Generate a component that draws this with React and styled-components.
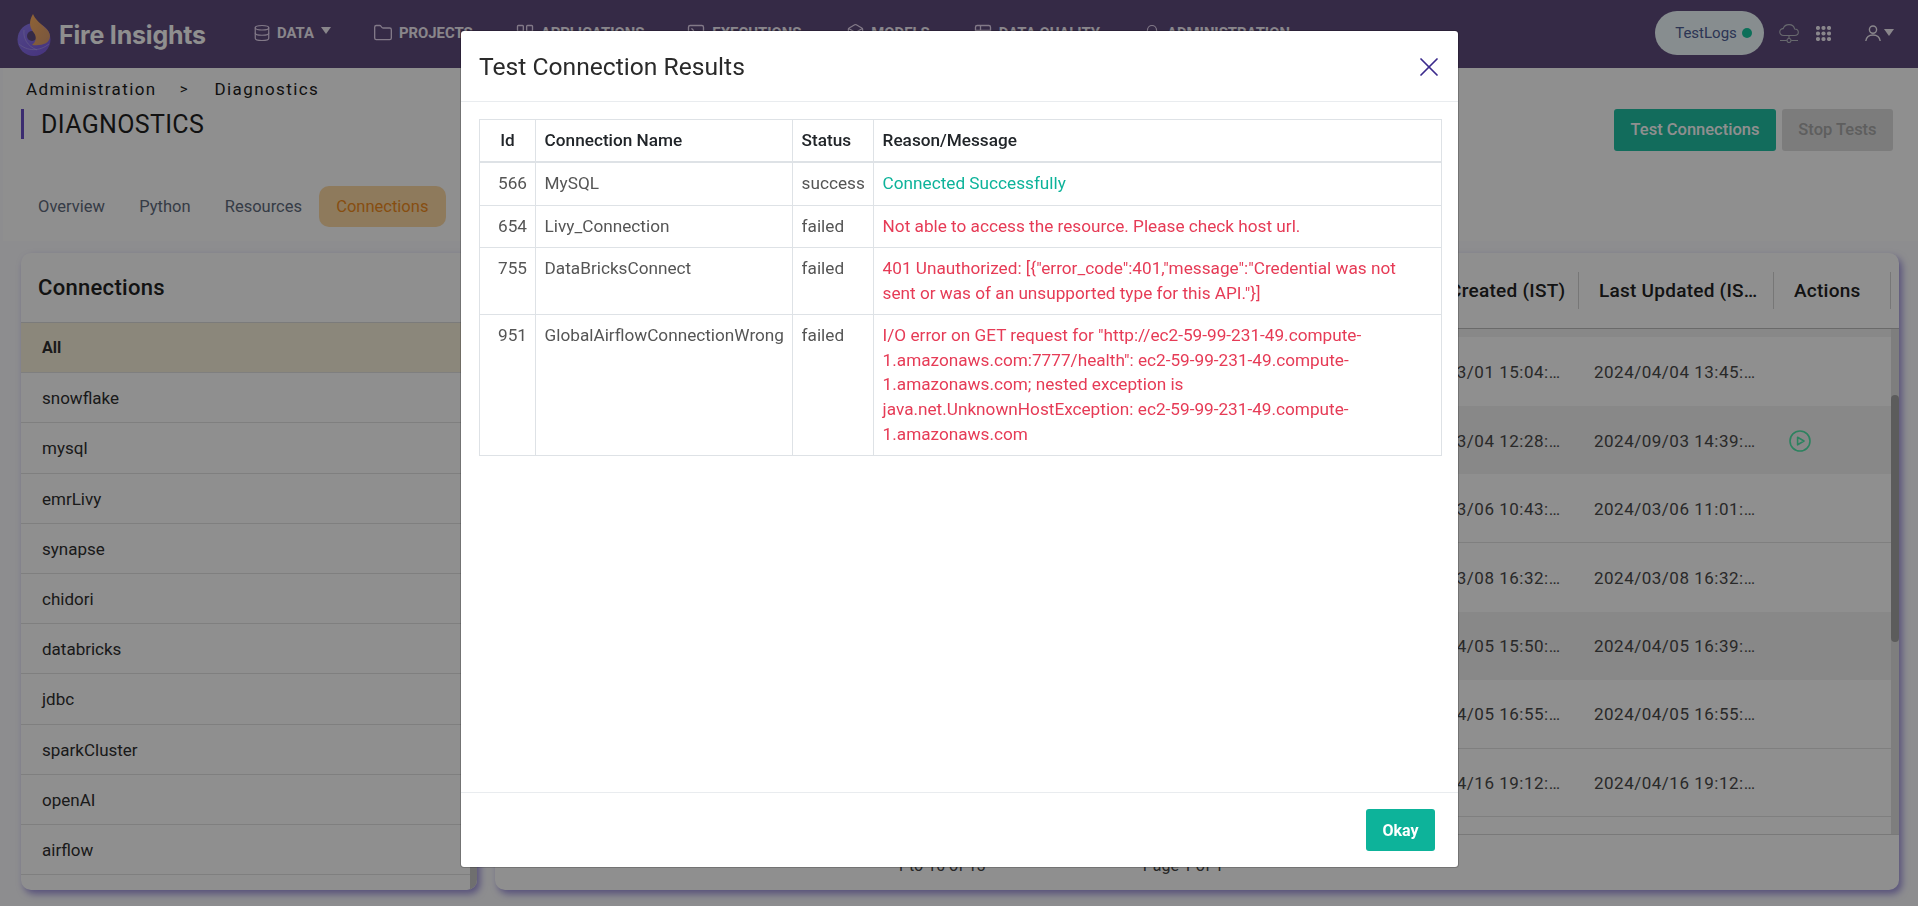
import React, { useLayoutEffect, useRef } from 'react';
import styled, { createGlobalStyle } from 'styled-components';
import { Database, Folder, LayoutGrid, SquareTerminal, Box, Table2, Bell, X } from 'lucide-react';

const Global = createGlobalStyle`
  html, body { margin: 0; padding: 0; height: 100%; overflow: hidden; }
  body { font-family: Roboto, "Liberation Sans", sans-serif; background: #fbfbff; color: #212529; }
  * { box-sizing: border-box; }
`;

const Page = styled.div`
  width: 1918px; height: 906px; display: flex; flex-direction: column; overflow: hidden;
`;

const Nav = styled.header`
  height: 68px; flex: none; background: #5f4b7d; display: flex; align-items: center; padding: 0 24px 0 17px;
`;
const Brand = styled.div`
  display: flex; align-items: center; gap: 8px; width: 236px; padding-top: 1px;
`;
const BrandName = styled.span`
  font-family: Inter, "Open Sans", sans-serif; font-weight: 700; font-size: 25px; letter-spacing: -0.2px; color: #fff; white-space: nowrap;
`;
const Menu = styled.nav`
  display: flex; gap: 42px; align-items: center; padding-bottom: 3px;
`;
const MenuItem = styled.a`
  display: flex; align-items: center; gap: 6px; font-size: 14.85px; font-weight: 700; color: #f4eff8; white-space: nowrap;
  margin-left: ${p => p.$ml || 0}px;
  svg { color: #e8d8f2; }
`;
const Caret = styled.i`
  display: inline-block; width: 0; height: 0; margin-left: ${p => p.$ml || 0}px; margin-bottom: 4px;
  border-left: 5px solid transparent; border-right: 5px solid transparent; border-top: 7px solid #f4eff8;
`;
const NavRight = styled.div`
  margin-left: auto; display: flex; align-items: center;
`;
const EnvPill = styled.div`
  width: 109px; height: 44px; border-radius: 22px; background: #f0fbff; display: flex; align-items: center; gap: 5px;
  justify-content: center; padding-left: 8px; font-size: 15px; color: #4f5f96; margin-bottom: 2px;
`;
const Dot = styled.i`
  width: 10px; height: 10px; border-radius: 50%; background: #16c79f;
`;
const IconSlot = styled.span`
  display: flex; align-items: center; margin-left: ${p => p.$ml}px; color: ${p => p.$c || '#f4eff8'}; margin-bottom: 2px;
`;

const PageHead = styled.section`
  height: 173px; flex: none; margin-left: 3px; background: #fff; display: flex; justify-content: space-between; padding: 9px 25px 0 18px;
`;
const HeadLeft = styled.div`display: flex; flex-direction: column;`;
const Crumbs = styled.div`
  height: 24px; margin-left: 5px; display: flex; align-items: center; font-size: 17px; letter-spacing: 1.4px; color: #1c1c1c;
`;
const CrumbSep = styled.span`
  margin: 0 27px 0 23px; font-size: 15px; letter-spacing: 0;
`;
const Title = styled.h1`
  margin: 8px 0 0; height: 30px; border-left: 3px solid #6a4fc8; padding-left: 17px; font-size: 25px; letter-spacing: .35px; line-height: 32px; font-weight: 400; color: #1f1f1f;
`;
const Tabs = styled.div`
  display: flex; margin-top: 47px;
`;
const Tab = styled.button`
  height: 41px; border: 0; padding: 0 17.1px 1px; border-radius: 10px; font: 400 16.5px Roboto, sans-serif;
  background: ${p => (p.$active ? '#fdd9a5' : 'transparent')}; color: ${p => (p.$active ? '#f08c1e' : '#5f6b7d')};
`;
const HeadActions = styled.div`
  display: flex; gap: 6px; padding-top: 32px;
`;
const ActionBtn = styled.button`
  height: 42px; border: 0; border-radius: 3px; font: 500 16.5px Roboto, sans-serif; padding: 0 0 2px; width: ${p => p.$w}px;
  background: ${p => (p.$muted ? '#dedede' : '#20c0a4')}; color: ${p => (p.$muted ? '#a8a8a8' : '#fff')};
`;

const Main = styled.main`
  flex: 1; min-height: 0; display: flex; gap: 18px; padding: 12px 19px 16px 21px;
`;
const Card = styled.div`
  background: #fff; border-radius: 10px; overflow: hidden; display: flex; flex-direction: column;
  box-shadow: 3px 4px 7px rgba(80, 60, 190, 0.55);
`;
const SideCard = styled(Card)`width: 456px; flex: none;`;
const TableCard = styled(Card)`flex: 1; min-width: 0;`;
const SideTitle = styled.h2`
  margin: 0; height: 70px; flex: none; display: flex; align-items: center; padding-left: 17px; font-size: 22px; font-weight: 500; letter-spacing: .3px;
  border-bottom: 1px solid #dcdcdc; color: #222;
`;
const Scroller = styled.div`
  flex: 1; min-width: 0; min-height: 0; overflow-y: scroll; scrollbar-width: none;
`;
const Track = styled.div`
  flex: none; width: ${p => p.$w}px; background: ${p => p.$bg};
`;
const Thumb = styled.div`
  height: 247px; margin-top: 66px; border-radius: 4px; background: #a5a5a5;
`;
const SideBody = styled.div`
  flex: 1; min-height: 0; display: flex;
`;
const SideItem = styled.div`
  height: 50.2px; display: flex; align-items: center; padding: ${p => (p.$active ? 0 : 1)}px 0 0 21px; font-size: ${p => (p.$active ? 16 : 17)}px; border-bottom: 1px solid #e2e2e2;
  font-weight: ${p => (p.$active ? 700 : 400)}; background: ${p => (p.$active ? '#f8f0dc' : 'transparent')}; color: #2f2f2f;
`;

const GridHead = styled.div`
  height: 76px; flex: none; display: grid; grid-template-columns: 1fr 195px 195px 117px; align-items: center; padding-right: 8px;
  border-bottom: 1px solid #bdbdbd;
`;
const HeadCell = styled.div`
  height: 37px; display: flex; align-items: center; padding: 0 ${p => p.$pr ?? 15}px 0 20px; font-size: 19px; font-weight: 500; letter-spacing: .25px; color: #222;
  border-right: 1px solid #d4d4d4; white-space: nowrap; overflow: hidden; min-width: 0;
  span { overflow: hidden; text-overflow: ellipsis; }
`;
const GridBody = styled.div`
  flex: none; height: 505px; display: flex;
`;
const GridRows = styled.div`padding-top: 5px;`;
const GridRow = styled.div`
  height: 68.6px; display: grid; grid-template-columns: 1fr 195px 195px 117px; align-items: center;
  background: ${p => (p.$shade ? '#f2f2f2' : '#fff')}; ${p => (p.$line ? 'border-bottom: 1px solid #e2e2e2;' : '')}
`;
const Cell = styled.div`
  padding: 1px 15px 0; font-size: 17px; letter-spacing: .5px; color: #4a4a4a; white-space: nowrap; overflow: hidden; text-overflow: ellipsis;
`;
const ActionCell = styled.div`
  padding: 2px 0 0 15px; display: flex; color: #50e8aa;
`;
const GridFoot = styled.div`
  flex: 1; border-top: 1px solid #d8d8d8; display: flex; align-items: center; gap: 157px; font-size: 16px; color: #444; padding: 6px 0 0 401px;
`;

const Backdrop = styled.div`
  position: fixed; inset: 0; background: rgba(0, 0, 0, 0.44); display: flex; justify-content: center; padding: 30px 0 0 1px;
`;
const Modal = styled.div`
  width: 999px; height: 838px; background: #fff; border-radius: 4px; display: flex; flex-direction: column; border: 1px solid rgba(0,0,0,.2); background-clip: padding-box;
`;
const ModalHead = styled.div`
  height: 71px; flex: none; display: flex; align-items: center; justify-content: space-between; padding: 0 13px 0 18px; border-bottom: 1px solid #e9ecef;
`;
const ModalTitle = styled.h3`
  margin: 0; font-size: 24.65px; font-weight: 400; color: #2a2a2a;
`;
const CloseBtn = styled.button`
  border: 0; background: none; padding: 0; margin-top: 2px; display: flex; color: #3b2a8c;
`;
const ModalBody = styled.div`
  flex: 1; padding: 17px 16px 0 18px;
`;
const Results = styled.table`
  width: 963px; border-collapse: collapse; table-layout: fixed; font-size: 17.2px; line-height: 24.7px;
  th, td { border: 1px solid #dee2e6; padding: 8.1px 8.6px 8.5px; vertical-align: top; text-align: left; }
  th { font-weight: 500; color: #212529; border-bottom-width: 2px; }
  td { color: #555; }
`;
const IdHead = styled.th`&& { text-align: center; }`;
const IdCell = styled.td`&& { text-align: right; padding-right: 8px; }`;
const Msg = styled.td`&& { color: ${p => (p.$ok ? '#0db39a' : '#e63b56')}; }`;
const ModalFoot = styled.div`
  height: 75px; flex: none; border-top: 1px solid #e9ecef; display: flex; justify-content: flex-end; align-items: flex-start; padding: 16px 23px 0 0;
`;
const OkBtn = styled.button`
  width: 69px; height: 42px; border: 0; border-radius: 3px; background: #0db39a; color: #fff; font: 700 16px Roboto, sans-serif;
`;

const Flame = () => (
  <svg width="34" height="42" viewBox="0 0 34 42">
    <defs>
      <linearGradient id="bowl" x1="0" y1="0" x2="1" y2="1">
        <stop offset="0" stopColor="#8f7cf0" /><stop offset="1" stopColor="#7d5ae0" />
      </linearGradient>
      <linearGradient id="gold" x1="0" y1="0" x2="1" y2="1">
        <stop offset="0" stopColor="#ffb060" /><stop offset="1" stopColor="#d79a70" />
      </linearGradient>
    </defs>
    <circle cx="17" cy="25.5" r="16.5" fill="url(#bowl)" />
    <path d="M2 30 C10 37 22 38 32 30" stroke="#b8a8f0" strokeWidth="1" fill="none" opacity=".6" />
    <path d="M7 16 C6 24 10 32 20 36" stroke="#b8a8f0" strokeWidth="1" fill="none" opacity=".6" />
    <circle cx="15" cy="22" r="5" fill="#5f4b7d" />
    <path d="M16 0 C11 8 13 14 17 19 C20 23 19 28 15 31 C24 32 33 30 33 22 C33 14 20 10 16 0 Z" fill="url(#gold)" />
  </svg>
);

const CloudNet = () => (
  <svg width="20" height="19" viewBox="0 0 20 19" fill="none" stroke="currentColor" strokeWidth="1.1">
    <path d="M5 11.5 C1.5 11.5 .6 9 .8 7.5 C1 5.5 3 4.5 4.2 4.7 C5 2 7.5 .6 10 .6 C13 .6 15.2 2.6 15.6 5 C17.8 5 19.3 6.5 19.3 8.3 C19.3 10.3 17.6 11.5 15.5 11.5 Z" />
    <path d="M10 11.5 V14.5 M1 16.5 H7.8 M12.2 16.5 H19" />
    <circle cx="10" cy="16.5" r="2" />
  </svg>
);
const Apps = () => (
  <svg width="15" height="15" viewBox="0 0 15 15" fill="currentColor">
    {[2, 7.5, 13].flatMap(x => [2, 7.5, 13].map(y => <circle key={`${x}-${y}`} cx={x} cy={y} r="2.1" />))}
  </svg>
);
const Person = () => (
  <svg width="16" height="17" viewBox="0 0 16 17" fill="none" stroke="currentColor" strokeWidth="1.4">
    <circle cx="8" cy="4.6" r="3.6" />
    <path d="M.8 16 C1.5 11.5 4.5 10 8 10 C11.5 10 14.5 11.5 15.2 16" />
  </svg>
);
const PlayRing = () => (
  <svg width="22" height="22" viewBox="0 0 22 22" fill="none" stroke="currentColor" strokeWidth="1.6">
    <circle cx="11" cy="11" r="10" />
    <path d="M8.6 7.2 L15 11 L8.6 14.8 Z" strokeLinejoin="round" />
  </svg>
);

const sources = ['All', 'snowflake', 'mysql', 'emrLivy', 'synapse', 'chidori', 'databricks', 'jdbc', 'sparkCluster', 'openAI', 'airflow', ''];

const rows = [
  { c: '2024/02/20 11:20:41', u: '2024/02/20 11:20:41' },
  { c: '2024/02/27 17:02:13', u: '2024/02/27 17:02:13', shade: true },
  { c: '2024/03/01 15:04:52', u: '2024/04/04 13:45:10' },
  { c: '2024/03/04 12:28:33', u: '2024/09/03 14:39:27', shade: true, play: true },
  { c: '2024/03/06 10:43:19', u: '2024/03/06 11:01:08', line: true },
  { c: '2024/03/08 16:32:44', u: '2024/03/08 16:32:44' },
  { c: '2024/04/05 15:50:06', u: '2024/04/05 16:39:21', shade: true },
  { c: '2024/04/05 16:55:37', u: '2024/04/05 16:55:37', line: true },
  { c: '2024/04/16 19:12:02', u: '2024/04/16 19:12:02', line: true },
  { c: '2024/04/18 10:10:15', u: '2024/04/18 10:10:15' },
  { c: '2024/04/19 12:31:48', u: '2024/04/19 12:31:48' },
  { c: '2024/04/22 09:47:30', u: '2024/04/22 09:47:30' },
  { c: '2024/04/23 14:05:59', u: '2024/04/23 14:05:59' },
  { c: '2024/04/24 16:21:12', u: '2024/04/24 16:21:12' },
  { c: '2024/04/25 18:44:26', u: '2024/04/25 18:44:26' },
];

const results = [
  { id: 566, name: 'MySQL', status: 'success', msg: 'Connected Successfully', ok: true },
  { id: 654, name: 'Livy_Connection', status: 'failed', msg: 'Not able to access the resource. Please check host url.' },
  { id: 755, name: 'DataBricksConnect', status: 'failed', msg: '401 Unauthorized: [{"error_code":401,"message":"Credential was not sent or was of an unsupported type for this API."}]' },
  { id: 951, name: 'GlobalAirflowConnectionWrong', status: 'failed', msg: 'I/O error on GET request for "http://ec2-59-99-231-49.compute-1.amazonaws.com:7777/health": ec2-59-99-231-49.compute-1.amazonaws.com; nested exception is java.net.UnknownHostException: ec2-59-99-231-49.compute-1.amazonaws.com' },
];

export default function App() {
  const body = useRef(null);
  useLayoutEffect(() => { if (body.current) body.current.scrollTop = 133.5; }, []);
  return (
    <>
      <Global />
      <Page>
        <Nav>
          <Brand><Flame /><BrandName>Fire Insights</BrandName></Brand>
          <Menu>
            <MenuItem><Database size={18} strokeWidth={1.6} />DATA<Caret $ml={1} /></MenuItem>
            <MenuItem><Folder size={20} strokeWidth={1.6} />PROJECTS</MenuItem>
            <MenuItem><LayoutGrid size={20} strokeWidth={1.6} />APPLICATIONS</MenuItem>
            <MenuItem><SquareTerminal size={20} strokeWidth={1.6} />EXECUTIONS</MenuItem>
            <MenuItem $ml={3}><Box size={19} strokeWidth={1.6} />MODELS</MenuItem>
            <MenuItem $ml={1}><Table2 size={20} strokeWidth={1.6} />DATA QUALITY</MenuItem>
            <MenuItem $ml={1}><Bell size={18} strokeWidth={1.6} />ADMINISTRATION</MenuItem>
          </Menu>
          <NavRight>
            <EnvPill>TestLogs<Dot /></EnvPill>
            <IconSlot $ml={15} $c="#b9bcc4"><CloudNet /></IconSlot>
            <IconSlot $ml={17}><Apps /></IconSlot>
            <IconSlot $ml={34}><Person /></IconSlot>
            <Caret $ml={3} />
          </NavRight>
        </Nav>
        <PageHead>
          <HeadLeft>
            <Crumbs>Administration<CrumbSep>&gt;</CrumbSep>Diagnostics</Crumbs>
            <Title>DIAGNOSTICS</Title>
            <Tabs>
              <Tab>Overview</Tab><Tab>Python</Tab><Tab>Resources</Tab><Tab $active>Connections</Tab>
            </Tabs>
          </HeadLeft>
          <HeadActions>
            <ActionBtn $w={162}>Test Connections</ActionBtn>
            <ActionBtn $w={111} $muted>Stop Tests</ActionBtn>
          </HeadActions>
        </PageHead>
        <Main>
          <SideCard>
            <SideTitle>Connections</SideTitle>
            <SideBody>
              <Scroller>
                {sources.map((s, i) => <SideItem key={i} $active={i === 0}>{s}</SideItem>)}
              </Scroller>
              <Track $w={7} $bg="#c6c6c6" />
            </SideBody>
          </SideCard>
          <TableCard>
            <GridHead>
              <div />
              <HeadCell $pr={0}><span>Date Created (IST)</span></HeadCell>
              <HeadCell $pr={12}><span>Last Updated (IST)</span></HeadCell>
              <HeadCell><span>Actions</span></HeadCell>
            </GridHead>
            <GridBody>
              <Scroller ref={body}>
                <GridRows>
                  {rows.map((r, i) => (
                    <GridRow key={i} $shade={r.shade} $line={r.line}>
                      <div />
                      <Cell>{r.c}</Cell>
                      <Cell>{r.u}</Cell>
                      <ActionCell>{r.play && <PlayRing />}</ActionCell>
                    </GridRow>
                  ))}
                </GridRows>
              </Scroller>
              <Track $w={8} $bg="#e1e1e1"><Thumb /></Track>
            </GridBody>
            <GridFoot><span>1 to 10 of 13</span><span>Page 1 of 1</span></GridFoot>
          </TableCard>
        </Main>
      </Page>
      <Backdrop>
        <Modal>
          <ModalHead>
            <ModalTitle>Test Connection Results</ModalTitle>
            <CloseBtn aria-label="Close"><X size={32} strokeWidth={1.3} /></CloseBtn>
          </ModalHead>
          <ModalBody>
            <Results>
              <colgroup><col style={{ width: 56 }} /><col style={{ width: 257 }} /><col style={{ width: 81 }} /><col /></colgroup>
              <thead>
                <tr><IdHead>Id</IdHead><th>Connection Name</th><th>Status</th><th>Reason/Message</th></tr>
              </thead>
              <tbody>
                {results.map(r => (
                  <tr key={r.id}>
                    <IdCell>{r.id}</IdCell><td>{r.name}</td><td>{r.status}</td><Msg $ok={r.ok}>{r.msg}</Msg>
                  </tr>
                ))}
              </tbody>
            </Results>
          </ModalBody>
          <ModalFoot><OkBtn>Okay</OkBtn></ModalFoot>
        </Modal>
      </Backdrop>
    </>
  );
}
